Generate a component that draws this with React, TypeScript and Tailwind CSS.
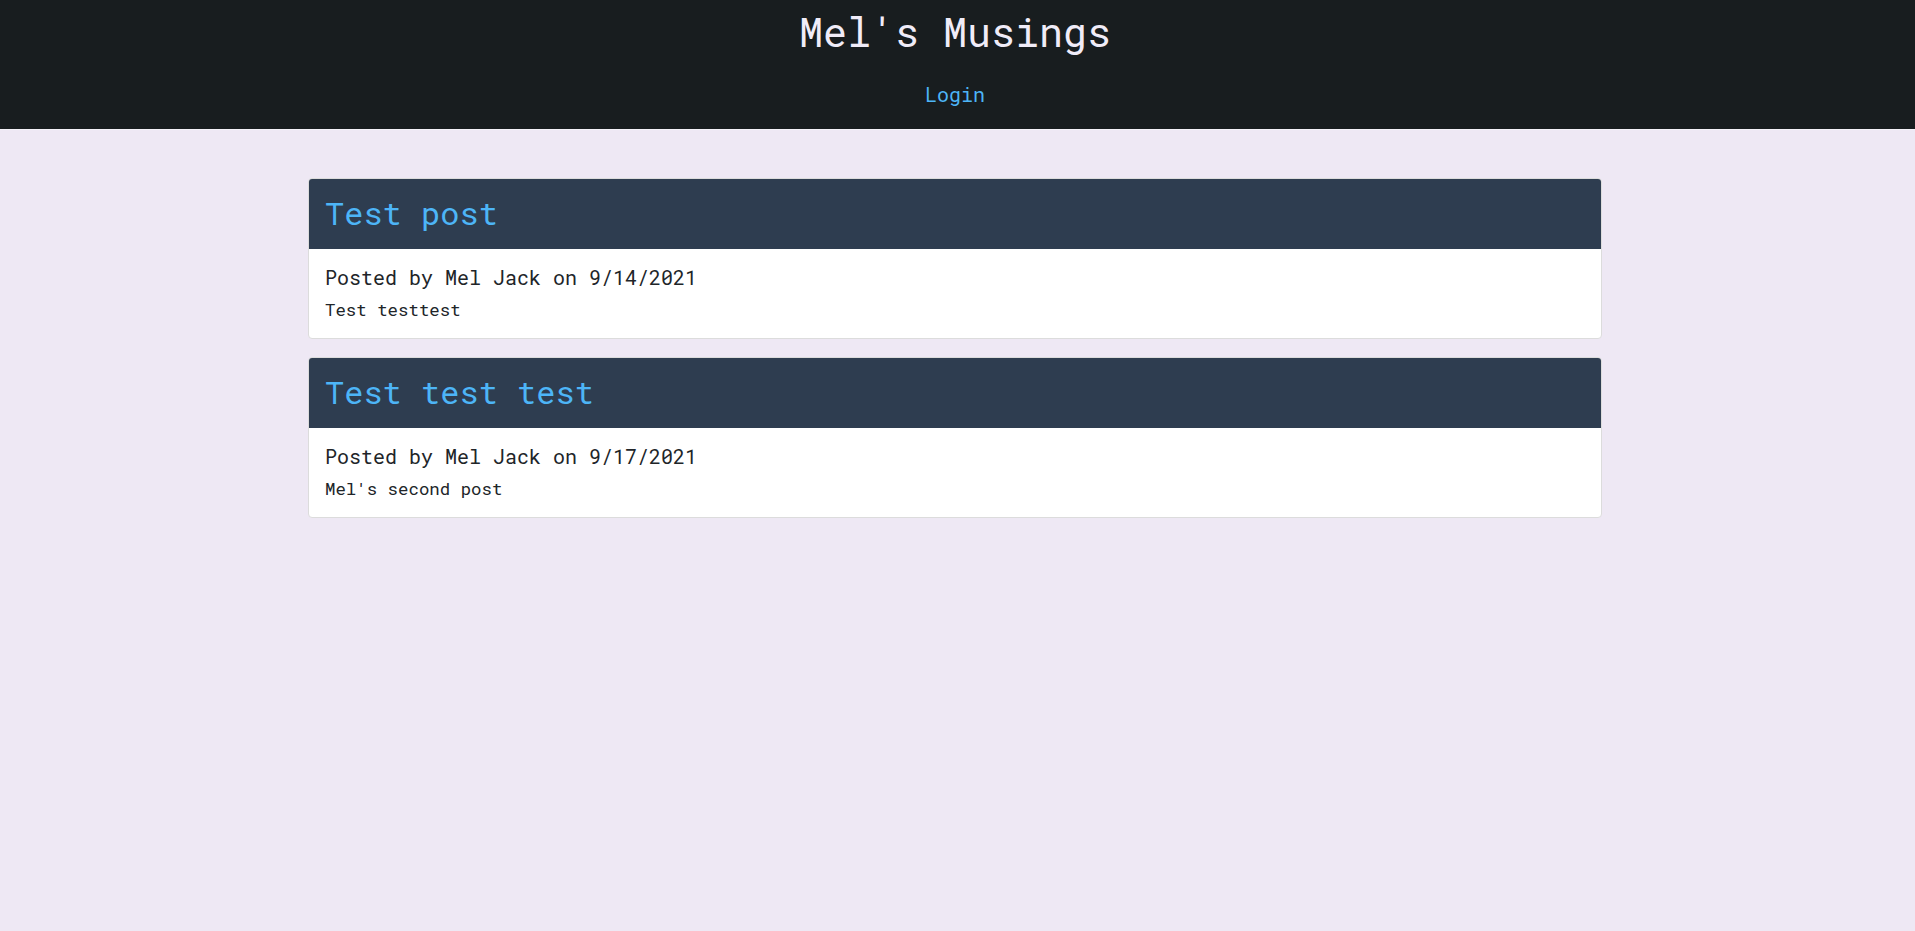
const posts = [
  { title: "Test post", author: "Mel Jack", date: "9/14/2021", body: "Test testtest" },
  { title: "Test test test", author: "Mel Jack", date: "9/17/2021", body: "Mel's second post" },
];

function PostCard({ title, author, date, body }: { title: string; author: string; date: string; body: string }) {
  return (
    <div className="rounded-[4px] border border-[#dcdcdc] bg-white overflow-hidden">
      <div className="bg-[#2e3d50] h-[70px] flex items-center px-4 pb-[2px]">
        <h2 className="text-[32px] text-[#4db5f7] leading-none">{title}</h2>
      </div>
      <div className="px-4 pt-[14px] pb-[16px] text-[#212529]">
        <p className="text-[20px] leading-[28px]">
          Posted by {author} on {date}
        </p>
        <p className="text-[17.4px] leading-[24px] mt-[7px]">{body}</p>
      </div>
    </div>
  );
}

export default function App() {
  return (
    <div
      className="min-h-[931px] bg-[#eee8f4]"
      style={{ fontFamily: '"Roboto Mono", "DejaVu Sans Mono", monospace' }}
    >
      <header className="bg-[#181d1f] h-[130px] pr-[5px] border-b border-[#f4f2f8] flex flex-col items-center">
        <h1 className="text-[40px] text-[#f0ecf8] leading-none mt-[12px]">Mel's Musings</h1>
        <a href="#" className="text-[20px] text-[#4db5f7] mt-[32px] leading-none">
          Login
        </a>
      </header>
      <main className="w-[1294px] ml-[308px] pt-[48px] flex flex-col gap-[18px]">
        {posts.map((p) => (
          <PostCard key={p.title} {...p} />
        ))}
      </main>
    </div>
  );
}
